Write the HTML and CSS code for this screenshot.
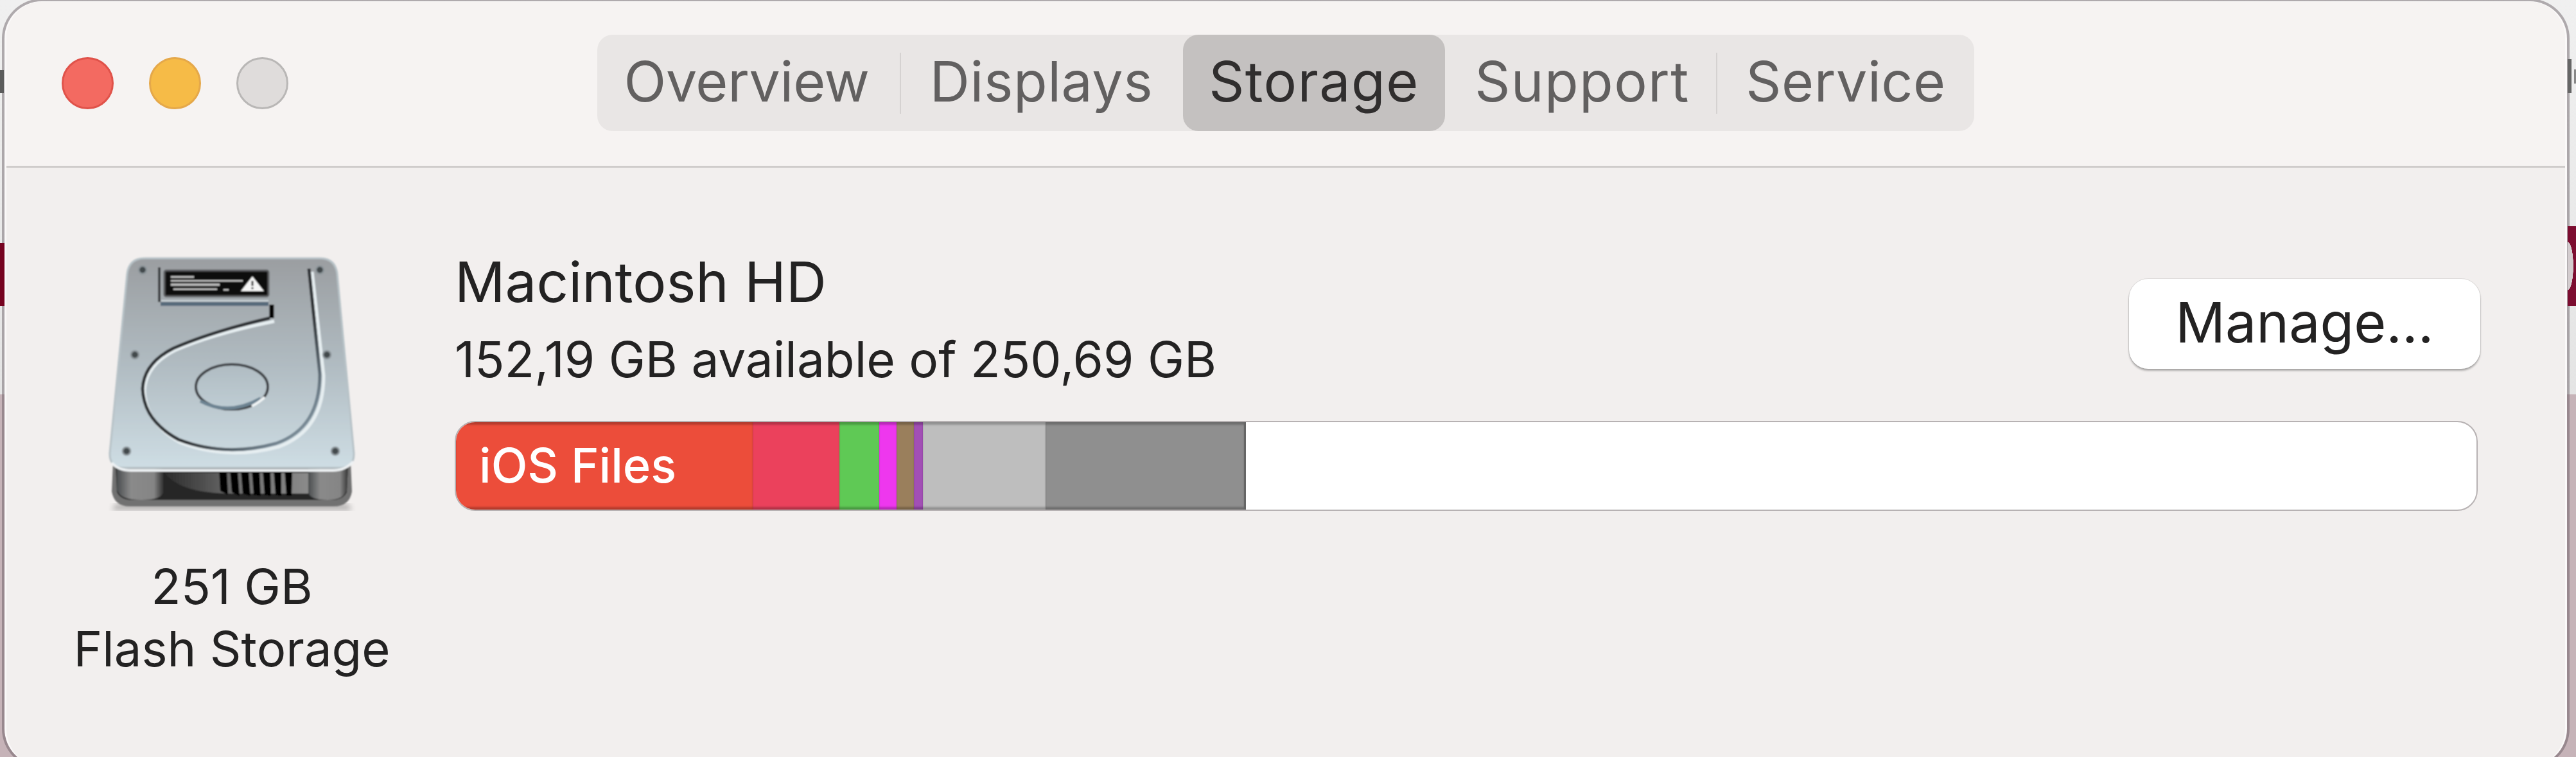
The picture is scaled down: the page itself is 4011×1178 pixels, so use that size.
FILE: index.html
```html
<!DOCTYPE html>
<html lang="en">
<head>
<meta charset="utf-8">
<title>Storage</title>
<link rel="stylesheet" href="styles.css">
</head>
<body>
<div class="desktop">
  <span class="edge edge-l-dark"></span>
  <span class="edge edge-l-red"></span>
  <span class="edge edge-r-i"></span>
  <span class="edge edge-r-dot"></span>
  <span class="edge edge-r-red"></span>
  <main class="window">
    <header class="titlebar">
      <div class="lights">
        <span class="light light-close"></span>
        <span class="light light-min"></span>
        <span class="light light-max"></span>
      </div>
      <nav class="tabs">
        <span class="tab tab-overview">Overview</span>
        <span class="tab tab-displays">Displays</span>
        <span class="tab tab-storage">Storage</span>
        <span class="tab tab-support">Support</span>
        <span class="tab tab-service">Service</span>
      </nav>
      <div class="titlebar-end"></div>
    </header>
    <section class="content">
      <div class="drive">
        <svg class="drive-icon" viewBox="0 0 500 460" xmlns="http://www.w3.org/2000/svg" aria-hidden="true">
          <defs>
            <linearGradient id="plate" x1="0" y1="0" x2="0" y2="1">
              <stop offset="0" stop-color="#9b9ea1"/>
              <stop offset=".5" stop-color="#b0bbc1"/>
              <stop offset="1" stop-color="#cedde4"/>
            </linearGradient>
            <linearGradient id="hub" x1="0" y1="0" x2="0" y2="1">
              <stop offset="0" stop-color="#b0bcc2"/>
              <stop offset="1" stop-color="#bfcdd4"/>
            </linearGradient>
            <linearGradient id="foot" x1="0" y1="0" x2="1" y2="0">
              <stop offset="0" stop-color="#4a4d4f"/>
              <stop offset=".3" stop-color="#8a8a8a"/>
              <stop offset=".8" stop-color="#858585"/>
              <stop offset="1" stop-color="#343434"/>
            </linearGradient>
            <linearGradient id="well" x1="0" y1="0" x2="1" y2="0">
              <stop offset="0" stop-color="#2c2c2c"/>
              <stop offset=".5" stop-color="#6d6d6d"/>
              <stop offset="1" stop-color="#8a8a8a"/>
            </linearGradient>
            <linearGradient id="grooveDark" gradientUnits="userSpaceOnUse" x1="100" y1="50" x2="380" y2="330">
              <stop offset="0" stop-color="#2e3134"/>
              <stop offset=".6" stop-color="#2e3134"/>
              <stop offset=".85" stop-color="#71828e"/>
              <stop offset="1" stop-color="#8fa0aa"/>
            </linearGradient>
            <filter id="soft"><feGaussianBlur stdDeviation="1"/></filter>
            <filter id="shadow"><feGaussianBlur stdDeviation="4"/></filter>
          </defs>
          <path d="M60 414H422L428 424H54Z" fill="#000" opacity=".25" filter="url(#shadow)"/>
          <g filter="url(#soft)">
            <path d="M56 350H426L428 395Q424 418 400 418H82Q58 418 54 395Z" fill="#717171"/>
            <path d="M60 352H422L420 396Q414 408 396 408H86Q68 408 62 396Z" fill="#262626"/>
            <path d="M62 358H134V396Q132 408 100 408Q66 408 62 392Z" fill="url(#foot)"/>
            <path d="M360 358H422L420 392Q416 408 390 408Q362 408 360 396Z" fill="url(#foot)"/>
            <path d="M136 366H360V398H230Q160 396 136 366Z" fill="url(#well)"/>
            <g fill="#060606">
              <path d="M221 361H233L235 400 223 394Z"/>
              <path d="M238 361H250L253 402 241 396Z"/>
              <path d="M255 361H267L270 402 258 398Z"/>
              <path d="M272 361H284L286 402 275 400Z"/>
              <path d="M289 361H301L302 402 292 400Z"/>
              <path d="M306 361H318L318 402 309 400Z"/>
              <path d="M323 361H335L334 402 326 401Z"/>
            </g>
            <path d="M105 32H378Q402 32 405 56L431 335Q432 358 408 358H74Q50 358 51 335L78 56Q81 32 105 32Z" fill="url(#plate)" stroke="#b7c2c7" stroke-width="3"/>
            <path d="M54 350Q64 362 84 362H398Q418 362 430 348" fill="none" stroke="#eef2f4" stroke-width="4"/>
            <path d="M363 50L381 212Q381 296 312 322Q232 344 158 316Q104 286 102 235Q104 195 150 172Q210 146 304 127" fill="none" stroke="#e6eef1" stroke-width="5" transform="translate(3 3)"/>
            <path d="M361 48L378 212Q378 296 310 320Q230 342 158 314Q104 285 102 235Q104 195 150 172Q210 146 300 125" fill="none" stroke="url(#grooveDark)" stroke-width="5"/>
            <path d="M128 46V100" stroke="#3a3d40" stroke-width="4" fill="none"/>
            <path d="M130 103H298" stroke="#56697a" stroke-width="6" fill="none"/>
            <path d="M131 98H298" stroke="#ccd6da" stroke-width="2" fill="none"/>
            <path d="M303 104V125" stroke="#050505" stroke-width="7" fill="none"/>
            <ellipse cx="241" cy="232" rx="56" ry="35" fill="url(#hub)" stroke="#3f4346" stroke-width="4"/>
            <path d="M192 254Q236 278 286 250" fill="none" stroke="#6d8392" stroke-width="5"/>
            <path d="M272 262Q284 256 292 248" fill="none" stroke="#f1f5f6" stroke-width="4"/>
            <rect x="136" y="51" width="162" height="40" rx="3" fill="#0e0e0e" stroke="#5a5c5e" stroke-width="3"/>
            <g stroke="#c4c4c4" fill="none">
              <path d="M146 61H182" stroke-width="3"/>
              <path d="M146 67H258" stroke-width="2.5"/>
              <path d="M146 73H222" stroke-width="3.5"/>
              <path d="M150 80H218M228 81H236" stroke-width="2.5"/>
            </g>
            <path d="M273 60L291 83H255Z" fill="#f6f6f6"/>
            <path d="M273 67V75M273 77V80" stroke="#333" stroke-width="3" fill="none"/>
            <g fill="#43484c" stroke="#8d959a" stroke-width="2.5">
              <circle cx="102" cy="50" r="6"/>
              <circle cx="378" cy="50" r="6"/>
              <circle cx="90" cy="182" r="6"/>
              <circle cx="389" cy="182" r="6"/>
              <circle cx="77" cy="332" r="6"/>
              <circle cx="402" cy="332" r="6"/>
            </g>
          </g>
        </svg>
        <p class="drive-label">251 GB<br>Flash Storage</p>
      </div>
      <div class="volume">
        <div class="volume-head">
          <div class="volume-info">
            <h1 class="volume-name">Macintosh HD</h1>
            <p class="volume-free">152,19 GB available of 250,69 GB</p>
          </div>
          <button class="manage" type="button">Manage...</button>
        </div>
        <div class="bar">
          <span class="seg seg-ios">iOS Files</span>
          <span class="seg seg-pink"></span>
          <span class="seg seg-green"></span>
          <span class="seg seg-magenta"></span>
          <span class="seg seg-brown"></span>
          <span class="seg seg-purple"></span>
          <span class="seg seg-light"></span>
          <span class="seg seg-dark"></span>
        </div>
      </div>
    </section>
  </main>
</div>
</body>
</html>
```
FILE: styles.css
```css
html, body {
  margin: 0;
  padding: 0;
  overflow: hidden;
}

.desktop {
  position: relative;
  box-sizing: border-box;
  width: 4011px;
  height: 1178px;
  padding: 2px 14px 0 7px;
  overflow: hidden;
  background: linear-gradient(#f0f0f0 0, #e4e4e4 613px, #c6b3b8 614px);
  font-family: Inter, "Liberation Sans", sans-serif;
  color: #232222;
}

.edge { position: absolute; display: block; }
.edge-l-dark { left: 0; top: 109px; width: 6px; height: 36px; background: #5c5c5c; }
.edge-l-red { left: 0; top: 378px; width: 7px; height: 98px; background: #760320; }
.edge-r-i { left: 3998px; top: 92px; width: 6px; height: 53px; background: #666; }
.edge-r-dot { left: 4008px; top: 108px; width: 3px; height: 22px; background: #888; }
.edge-r-red {
  left: 3998px;
  top: 352px;
  width: 13px;
  height: 124px;
  background:
    radial-gradient(ellipse 9px 38px at 0 50%, #d4cdcf 97%, transparent 100%),
    #7c0d30;
}

.window {
  display: flex;
  flex-direction: column;
  box-sizing: border-box;
  height: 1190px;
  border: solid #fbf9f9;
  border-width: 1px 3px 0;
  border-radius: 58px;
  overflow: hidden;
  background: #f2efee;
  box-shadow: 0 0 0 4px rgba(95, 85, 90, .45);
}

.titlebar {
  display: grid;
  grid-template-columns: 1fr auto 1fr;
  align-items: center;
  box-sizing: border-box;
  height: 258px;
  padding-bottom: 3px;
  background: #f6f3f2;
  border-bottom: 3px solid #cfcccb;
}

.lights { display: flex; gap: 55px; margin-left: 86px; }
.light { width: 81px; height: 81px; box-sizing: border-box; border-radius: 50%; border: 3px solid; }
.light-close { background: #f36a61; border-color: #e0524a; }
.light-min { background: #f6bb47; border-color: #e5a84a; }
.light-max { background: #dfdcdb; border-color: #b9b7b6; }

.tabs {
  display: flex;
  height: 150px;
  border-radius: 24px;
  background: #e9e6e5;
}

.tab {
  position: relative;
  display: flex;
  align-items: center;
  justify-content: center;
  padding-bottom: 5px;
  box-sizing: border-box;
  font-size: 86px;
  color: #626060;
  letter-spacing: .6px;
}
.tab-overview { width: 473px; padding-right: 8px; letter-spacing: -.3px; }
.tab-displays { width: 439px; padding-right: 2px; }
.tab-storage { width: 408px; border-radius: 24px; background: #c4c1c0; color: #302e2e; letter-spacing: 1.4px; }
.tab-support { width: 424px; padding-left: 3px; letter-spacing: 1.4px; }
.tab-service { width: 400px; }
.tab-overview::after, .tab-support::after {
  content: "";
  position: absolute;
  right: 0;
  top: 28px;
  height: 95px;
  width: 2px;
  background: #d5d2d1;
}

.content {
  display: flex;
  flex: 1;
  padding: 109px 0 0 110px;
}

.drive {
  display: flex;
  flex-direction: column;
  align-items: center;
  width: 500px;
  margin-right: 88px;
}
.drive-icon { display: block; width: 500px; height: 460px; flex: none; }
.drive-label {
  margin: 34px 0 0;
  padding-right: 18px;
  font-size: 76px;
  line-height: 97px;
  text-align: center;
  white-space: nowrap;
}

.volume { width: 3154px; margin-top: 9px; }
.volume-head { display: flex; justify-content: space-between; align-items: flex-start; height: 276px; }
.volume-name {
  margin: 0;
  font-size: 87px;
  font-weight: 400;
  line-height: 120px;
}
.volume-free {
  margin: 0;
  font-size: 76.5px;
  line-height: 120px;
}

.manage {
  width: 547px;
  height: 140px;
  margin-top: 55px;
  padding: 0 0 4px;
  border: 0;
  border-radius: 30px;
  background: #fff;
  box-shadow: 0 0 0 1px rgba(0, 0, 0, .08), 0 3px 3px rgba(0, 0, 0, .28);
  font: 400 86px Inter, "Liberation Sans", sans-serif;
  color: #232222;
}

.bar {
  display: flex;
  box-sizing: border-box;
  width: 3150px;
  height: 140px;
  border: 2px solid #b7b2b3;
  border-radius: 32px;
  overflow: hidden;
  background: #fff;
}

.seg {
  display: block;
  flex: none;
  height: 100%;
  box-shadow: inset 0 5px 3px -1px rgba(0, 0, 0, .24), inset 0 -5px 3px -1px rgba(0, 0, 0, .24);
}
.seg-ios {
  width: 462px;
  padding-left: 36px;
  box-sizing: border-box;
  background: #ec4d3a;
  color: #fff;
  font-size: 74px;
  font-weight: 500;
  line-height: 134px;
}
.seg-pink { width: 135px; background: #eb415c; }
.seg-green { width: 62px; background: #5fc955; }
.seg-magenta { width: 27px; background: #ee37ee; }
.seg-brown { width: 27px; background: #9a7f5c; }
.seg-purple { width: 14px; background: #a24fb5; }
.seg-light { width: 191px; background: #bebebe; }
.seg-dark { width: 312px; background: #8f8f8f; border-right: 3px solid #666; box-sizing: border-box; }
```
